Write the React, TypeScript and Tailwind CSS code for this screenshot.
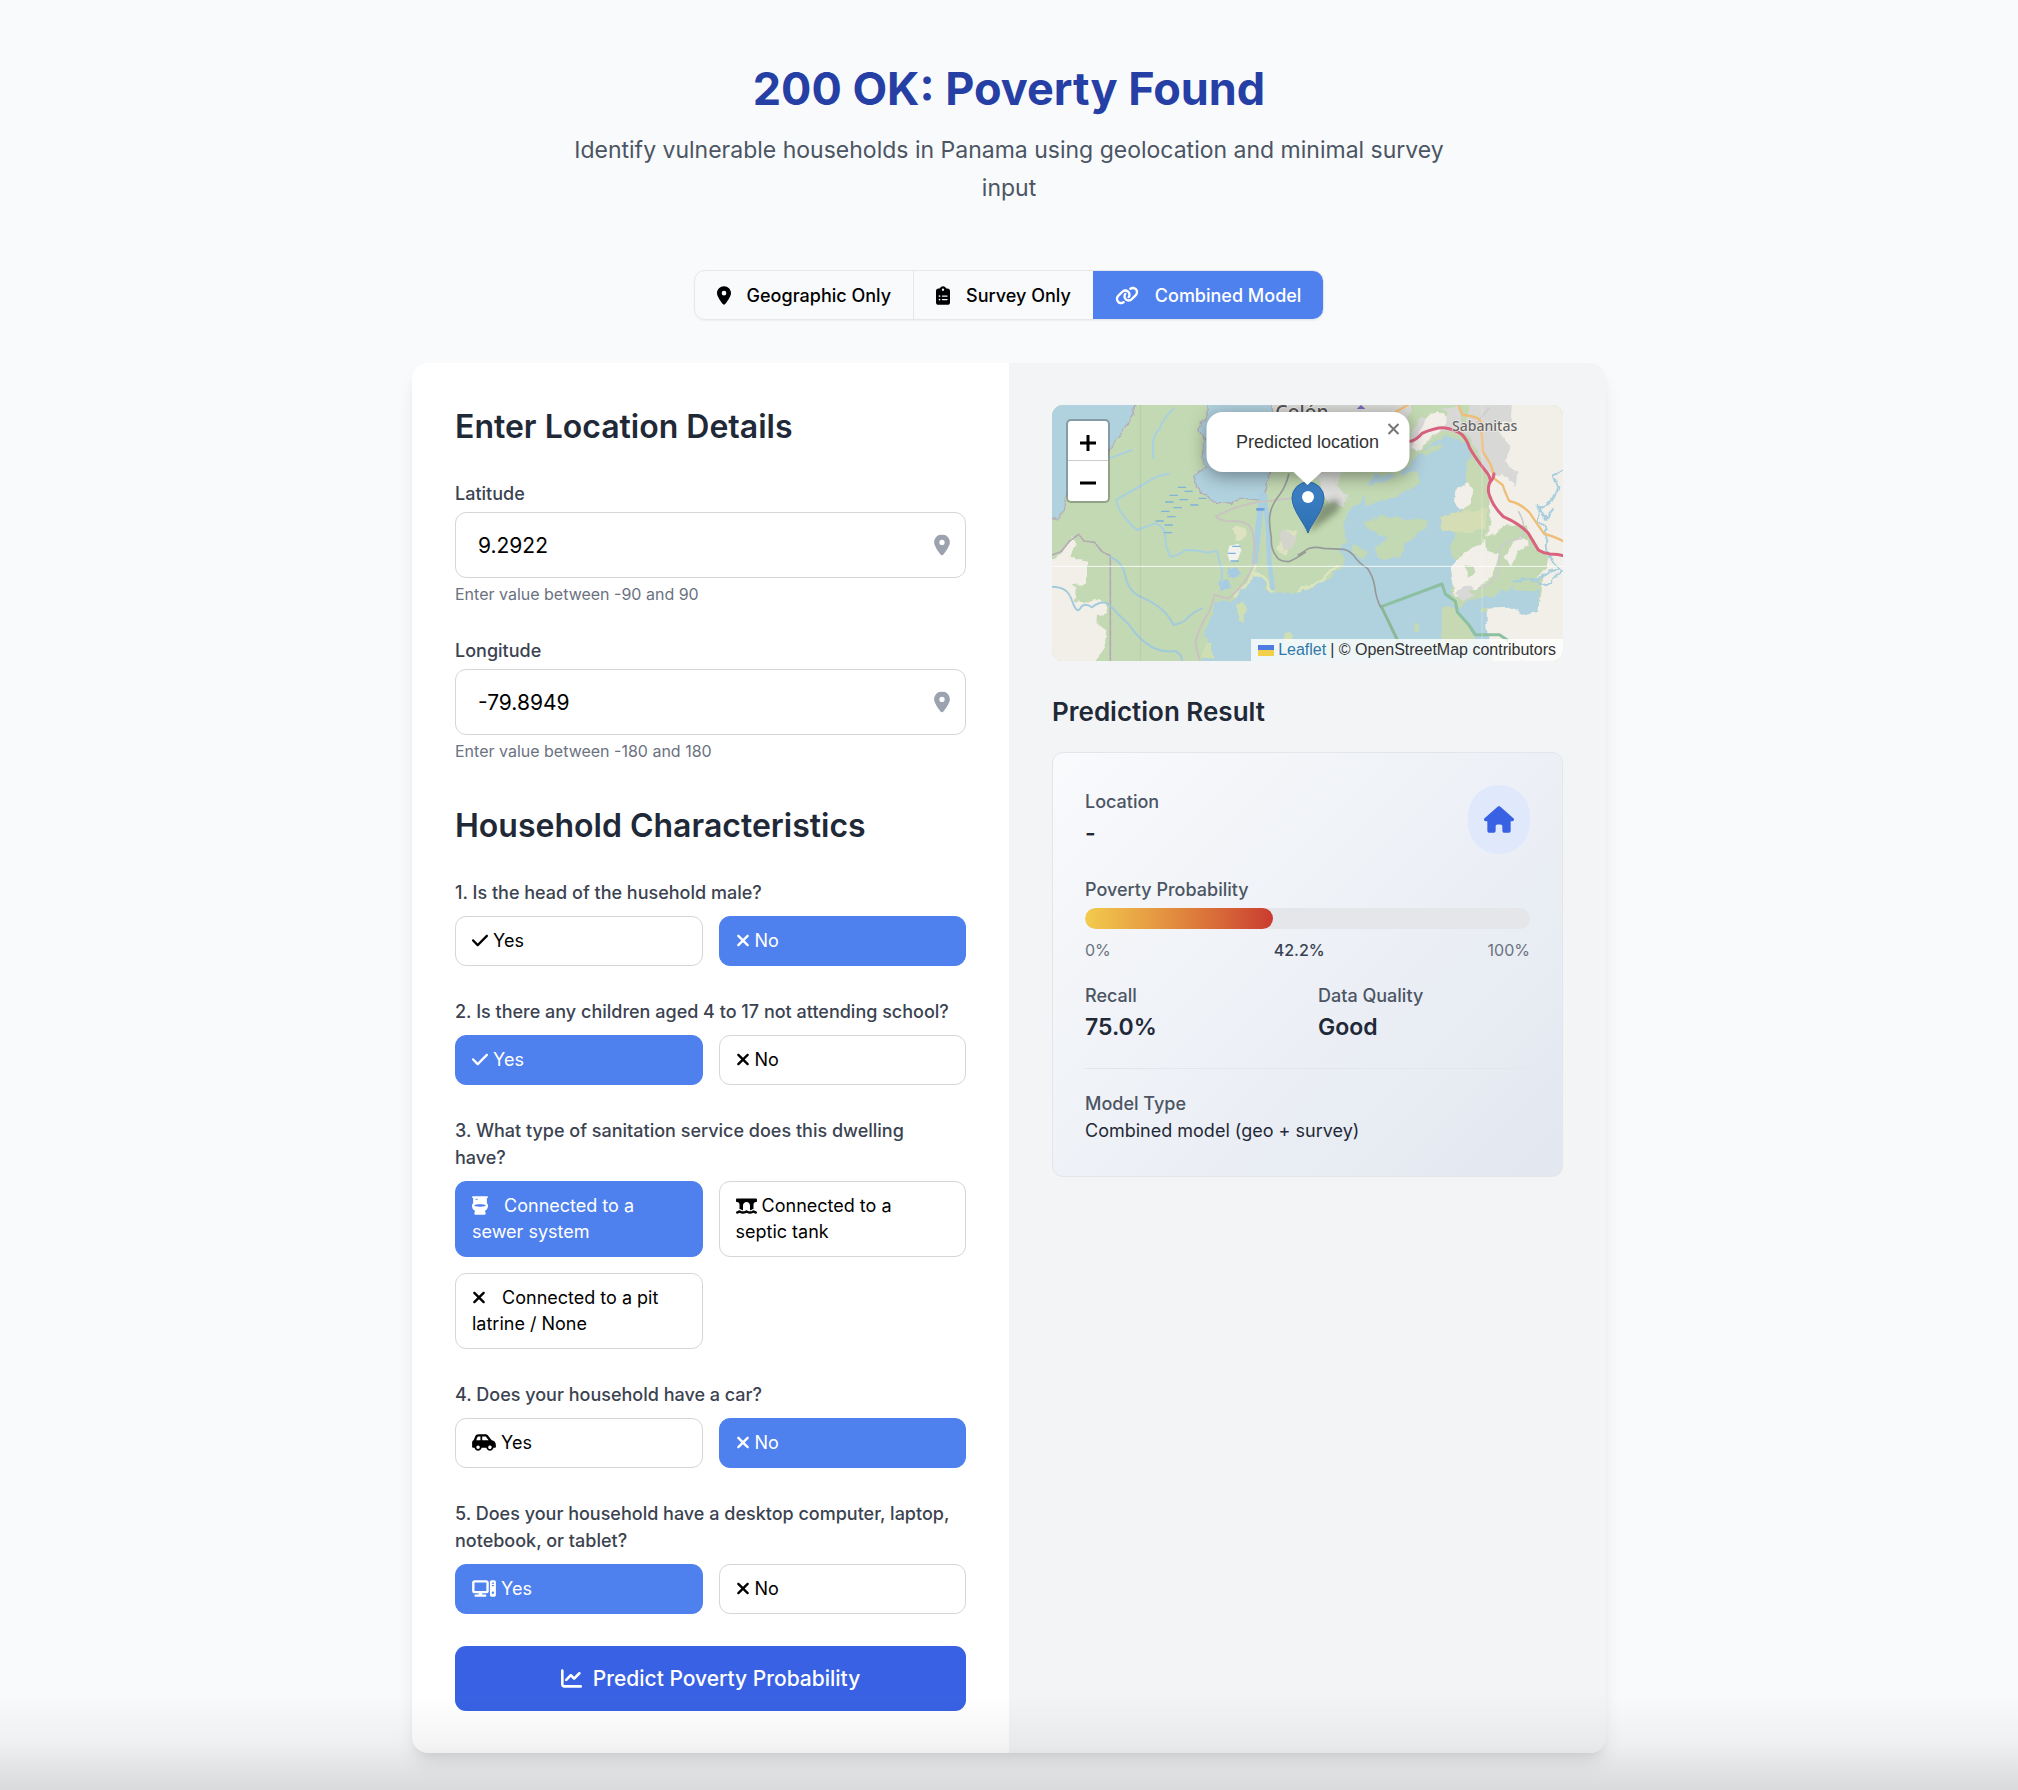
import { useState } from "react";
import type { ReactNode } from "react";
import type { IconType } from "react-icons";
import {
  FaBridgeWater,
  FaCarSide,
  FaChartLine,
  FaCheck,
  FaClipboardList,
  FaComputer,
  FaHouse,
  FaLink,
  FaLocationDot,
  FaToilet,
  FaXmark,
} from "react-icons/fa6";

type Option = { label: string; icon: IconType; size: string };
type Question = { text: string; options: Option[]; selected: number };

const yes: Option = { label: "Yes", icon: FaCheck, size: "w-4" };
const no: Option = { label: "No", icon: FaXmark, size: "w-[14px]" };

const questions: Question[] = [
  { text: "1. Is the head of the husehold male?", options: [yes, no], selected: 1 },
  { text: "2. Is there any children aged 4 to 17 not attending school?", options: [yes, no], selected: 0 },
  {
    text: "3. What type of sanitation service does this dwelling have?",
    options: [
      { label: "Connected to a sewer system", icon: FaToilet, size: "w-4 mr-[11px]" },
      { label: "Connected to a septic tank", icon: FaBridgeWater, size: "w-[21px]" },
      { label: "Connected to a pit latrine / None", icon: FaXmark, size: "w-[14px] mr-[11px]" },
    ],
    selected: 0,
  },
  {
    text: "4. Does your household have a car?",
    options: [{ label: "Yes", icon: FaCarSide, size: "w-6" }, no],
    selected: 1,
  },
  {
    text: "5. Does your household have a desktop computer, laptop, notebook, or tablet?",
    options: [{ label: "Yes", icon: FaComputer, size: "w-6" }, no],
    selected: 0,
  },
];

const models: Option[] = [
  { label: "Geographic Only", icon: FaLocationDot, size: "w-[14px]" },
  { label: "Survey Only", icon: FaClipboardList, size: "w-[14px]" },
  { label: "Combined Model", icon: FaLink, size: "w-6" },
];

function ModelSwitch() {
  const [active, setActive] = useState(2);
  return (
    <div className="flex overflow-hidden rounded-[11px] border border-[#e5e7eb] shadow-xs">
      {models.map(({ label, icon: Icon, size }, i) => (
        <button
          key={label}
          type="button"
          aria-pressed={i === active}
          onClick={() => setActive(i)}
          className={`flex h-12 items-center gap-4 px-[22px] text-[18px] font-medium ${
            i === active ? "bg-[#4f81ee] text-white" : "text-black"
          } ${i === 0 ? "border-r border-[#e5e7eb]" : ""}`}
        >
          <Icon className={`h-[19px] ${size}`} />
          {label}
        </button>
      ))}
    </div>
  );
}

function CoordinateField(props: { id: string; label: string; value: string; hint: string }) {
  return (
    <div>
      <label htmlFor={props.id} className="mb-[5px] block text-[18px] leading-[27px] font-medium text-[#3b4351]">
        {props.label}
      </label>
      <div className="relative">
        <input
          id={props.id}
          type="text"
          defaultValue={props.value}
          className="h-[66px] w-full rounded-[11px] border border-[#d4d6da] bg-white px-[22px] text-[21px] text-black"
        />
        <FaLocationDot className="absolute top-1/2 right-4 h-[21px] w-4 -translate-y-1/2 text-[#9ca3af]" />
      </div>
      <p className="mt-[5px] text-base leading-[22px] text-[#6b7280]">{props.hint}</p>
    </div>
  );
}

function QuestionGroup({ question }: { question: Question }) {
  const [selected, setSelected] = useState(question.selected);
  return (
    <div role="group" aria-label={question.text}>
      <p className="pr-3 text-[18px] leading-[27px] font-medium text-[#3b4351]">{question.text}</p>
      <div className="mt-[10px] grid grid-cols-2 gap-4">
        {question.options.map(({ label, icon: Icon, size }, i) => (
          <button
            key={label}
            type="button"
            aria-pressed={i === selected}
            onClick={() => setSelected(i)}
            className={`rounded-[11px] border py-[11px] pr-7 pl-4 text-left text-[18px] leading-[26px] ${
              i === selected
                ? "border-[#4f81ee] bg-[#4f81ee] text-white"
                : "border-[#d4d6da] bg-white text-black"
            }`}
          >
            <Icon className={`inline-block h-[19px] align-[-3px] ${size}`} /> {label}
          </button>
        ))}
      </div>
    </div>
  );
}

const marshes = [
  [430, 277], [450, 289], [405, 301], [392, 321], [435, 314], [417, 338], [467, 330],
  [380, 349], [398, 365], [363, 378], [390, 390], [388, 413], [492, 310], [593, 454],
  [579, 475], [588, 498],
];

function MapTiles() {
  return (
    <svg
      aria-hidden="true"
      viewBox="39 30 1535 768"
      preserveAspectRatio="xMidYMid slice"
      className="absolute inset-0 h-full w-full"
      fill="none"
      strokeLinejoin="round"
      strokeLinecap="round"
    >
      <defs>
        <filter id="soft" x="-5%" y="-5%" width="110%" height="110%">
          <feTurbulence type="fractalNoise" baseFrequency="0.035" numOctaves="2" seed="4" />
          <feDisplacementMap in="SourceGraphic" scale="22" xChannelSelector="R" yChannelSelector="G" />
          <feGaussianBlur stdDeviation="1.2" />
        </filter>
        <filter id="smooth" x="-5%" y="-5%" width="110%" height="110%">
          <feGaussianBlur stdDeviation="1.2" />
        </filter>
      </defs>
      <rect x="0" y="0" width="1620" height="840" fill="#c3d9b3" />
      <g filter="url(#soft)">
        {/* western sea and bay */}
        <path fill="#b0d1de" stroke="#b4acb8" strokeWidth="4" strokeDasharray="14 5 4 5" d="M30 10H292l-8 46-18 34-30 36-26 44-8 40-60 60-66 36 2 42-18 24-40 6z" />
        <path fill="#b0d1de" stroke="#b0a9bb" strokeWidth="4" strokeDasharray="12 4 4 4" d="M505 10v54l-18 16-6 26 16 30-6 44 12 36-30 20-2 26 16 32 38 26 54 8 8-14 40-2 52 4 6-50 12-80 4-180z" />
        {/* south-west farmland */}
        <path fill="#f2efe9" d="M20 500l47-24 34-46 10 14-16 44 50 12v66l-42 4 8 10-2 38 24 4 32-14 12 10 28 8v30l-30 4-2 24 30 18-4 52-30 54H20z" />
        {/* town north of the pin */}
        <path fill="#d9d9d6" d="M700 10h420l-10 70-90 60-110 80-20 60 30 20-20 14-50-50-70-44h-60z" />
        <path fill="#dde3c0" d="M575 400l26-6 24 20-14 26-20-8zM730 430l20-32 26 12-12 36-30 34-22-20z" />
        <path fill="#d3d4cc" d="M735 405l24 4 16 22-14 26-30 8-6-30z" />
        {/* lake */}
        <path fill="#b0d1de" d="M485 820l20-70-8-40 22-50 12-42 40 4 40-34 30-42 22-18 22 60 75 6 55-14 60-34 35-24 10-30-20-24 22-30-8-50 16-46 40-24 22-60 20-20 70 0 80-80 62-38 60 26 26 44 22 60-18 40-26 28-18 60-40 80 26 60-20 60 8 50 40 22 70-4 90-24 72 14 6 60-30 22-30-16-60-4-36 20v60l-30 20 36 40v60z" />
        <path fill="#a6cbe2" d="M568 518l30 4 8 18-34 8zM540 560l30-4 4 24-32 8z" />
        <path stroke="#dbe5bd" strokeWidth="10" d="M648 510l-8 40-50 50M700 585l-20-30-28-20M780 585l60-24 56-44" />
        <path fill="#cfdfb4" d="M592 630l22-14 8 30-8 40-16-30zM500 750l24-8-4 50-30 5zM740 712l26 6-6 20-24-6z" />
      </g>
      <g filter="url(#smooth)">
        <path stroke="#b3a8b3" strokeWidth="5" strokeDasharray="16 5 4 5" d="M39 480l28-10 26-32 27-20 16 20 32 4 22 28 25 12v315" />
        <path stroke="#a3cadb" strokeWidth="6" d="M39 575q25 0 40 10t24 40q14 35 25 10 12-12 32 2 25-20 46-12 20 18 33 33l31 30q35 50 70 68t70 12q20 10 20 30M215 485q40 20 45 57 10 50 50 65 70 30 95 83 35-10 40-20 20-20 45-30" />
        <path stroke="#a9d0de" strokeWidth="6" d="M232 315q10 45 63 90l55-20q30 10 30 40 0 30 15 60 30-5 45-20 45 0 60 8l35-5q10 40 15 60v45M232 315q50-30 80-45 50-35 78-32M212 190l68-25M405 40q-40 40-40 60-30 20-20 90" />
        <path stroke="#8a95a0" strokeOpacity=".2" strokeWidth="3" d="M305 30v768" />
        <path fill="#f2f3ee" d="M572 452l28-6 8 20-12 30-22 4-8-22z" />
        <g stroke="#7fb4d8" strokeWidth="4">
          {marshes.map(([x, y]) => (
            <path key={`${x}-${y}`} d={`M${x - 11} ${y}h22`} />
          ))}
        </g>
        <path stroke="#a9cfe0" strokeWidth="18" d="M670 300l-10 90-12 110" />
        <path stroke="#a9cfe0" strokeWidth="14" d="M678 300l10 100 4 100 10 80" />
        <path stroke="#6f9fe0" strokeWidth="8" d="M656 343h18" />
      </g>
      <g transform="translate(780 0)">
        <g filter="url(#soft)">
          <path fill="#c3d9b3" d="M195 385l55-24 60 12 74 2-4 26-54 40-26 44-60 6-14-30 44-32-56-20zM165 445l40 24-10 26-32-20zM205 270l56-8 38-24 56-10 10 40-64 32-50 18-50 14-4-30zM365 170l54-26 10 10-50 30z" />
          <path fill="#d5ddb4" d="M425 370l55-22 85-6v60l-70 10-68-2z" />
          <path fill="#c6d9b2" d="M520 160l30 60 20 60-6 60-80 10 20-60-4-60zM430 640l40-2 34 50 24 40-60 30-40-10zM344 684l20 4-4 20-16-4z" />
          {/* eastern plains */}
          <path fill="#f2efe9" d="M470 290l40-26 14 20-6 40-30 20-22-22zM535 140l60-60 50-60h190v780H585l-22-100 2-60 60-6 40 16 55-10 10-90-120-20-80 60-60 16-14-90 46-46 62-36 12-60-10-150z" />
          <path fill="#d8d8d6" d="M520 20h120l-4 60-50 10 50 70-20 40 44 30-10 40-36-30-34 10-50-90-40-60zM350 90l40-40 90-16 20 80-70-10-70 60-50 0zM470 590l50-20 8 30-40 20z" />
          <path fill="#c3d9b3" d="M562 430l60-42 62 6 24 60 46 30-10 40-54 40-60 6-60 40-60-20 60-30 30-80-34-10zM345 36l70-4 30 26-30 26-60-20zM500 510l22 4 6 24-20 10z" />
          <path fill="#f2efe9" d="M640 440l30-16 20 26-30 20-24 40-14-20zM390 60l30-14 30 30-40 40-50 50-20-10z" />
          <path fill="#b0d1de" d="M570 606l70-26 50 10 30-10v70l-40 10-54-22-76 4-30 50-40-40 30-40z" />
          <path stroke="#a7cedd" strokeWidth="6" d="M800 225l-35 16 14 40-20 40-40 16 2 44 24 20-4 56 20 40 26 30-44 44-50-22-50 12M720 330l24 44 22-32M700 560l80-40" />
          <path fill="#dddddb" d="M75 240l30 20 40 40-8 40-50-20-22-40z" />
        </g>
        <g filter="url(#smooth)">
          <path stroke="#cccccc" strokeWidth="5" d="M600 470q10-34 70-40 10-30 0-60l-10-20M540 580q50-10 60-60l4-50M530 90l40-50" />
          <path stroke="#f0bd77" strokeWidth="7" d="M480 30q6 25 14 30 50 5 54 22l4 88q24 35 28 50l6 30 26 20q10 30 20 48 30 5 60 34 20 30 44 64 40 12 60 24M286 54l44-26" />
          <path stroke="#d9627e" strokeWidth="9" d="M330 140q25-5 40-25 40-18 65-17 35 5 55 21 15 15 23 40 20 35 55 78 8 12 6 23-10 25 0 45 10 30 40 60 50 22 75 50 15 25 30 50 15 10 35 12 25 0 45 6M574 262q12-14 12-26" />
          <path stroke="#8cc0a0" strokeWidth="9" d="M248 635l182-68 10 30 30 22 6 32 34 38 20 30h72l24 16" />
          <path stroke="#8bb795" strokeWidth="9" d="M248 635l52 108" />
          <path stroke="#959a98" strokeWidth="5" d="M245 635q-14-30-16-56-5-35-22-58-30-20-42-40-15-16-30-18l-60-3q-40-8-56 8l-20 12" />
        </g>
      </g>
      <g filter="url(#smooth)">
        <path stroke="#c9c4bf" strokeWidth="6" d="M530 365q70-38 150-46l80-9M530 365q20 14 40 14 60-8 72 32 10 50 4 90-10 50-76 110-20-2-42-12-10 40-20 55-34 60-38 90l14 56" />
        <path stroke="#979b96" strokeWidth="5" d="M800 472q-30 20-50 28-30 0-38-18-16-20-14-54-8-50-4-70 5-30 30-60 20-30 26-60" />
      </g>
      <path stroke="#ffffff" strokeOpacity=".3" strokeWidth="3" d="M1330 30v768" />
      <path stroke="#ffffff" strokeOpacity=".85" strokeWidth="3" d="M39 514h1535" />
      <path fill="#7a68b8" d="M954 42l13-12 13 12z" />
      <g fontFamily="'Noto Sans', sans-serif" fontWeight="500" textAnchor="middle" stroke="#f4f2ee" strokeOpacity=".7" paintOrder="stroke">
        <text x="790" y="72" fontSize="58" fill="#555555" strokeWidth="6">Colón</text>
        <text x="1338" y="108" fontSize="42" fill="#666666" strokeWidth="5">Sabanitas</text>
      </g>
    </svg>
  );
}

function LocationMap() {
  return (
    <div className="relative h-64 overflow-hidden rounded-[11px] font-['Liberation_Sans',Arial,sans-serif]">
      <MapTiles />
      <div className="absolute top-[14px] left-[14px] flex flex-col overflow-hidden rounded-[5px] border-2 border-black/25 bg-white bg-clip-padding text-black">
        <button type="button" aria-label="Zoom in" className="flex h-10 w-10 items-center justify-center border-b border-[#cccccc] pt-1">
          <svg viewBox="0 0 16 16" className="h-4 w-4" stroke="currentColor" strokeWidth="3"><path d="M8 0v16M0 8h16" /></svg>
        </button>
        <button type="button" aria-label="Zoom out" className="flex h-10 w-10 items-center justify-center pt-1">
          <svg viewBox="0 0 16 16" className="h-4 w-4" stroke="currentColor" strokeWidth="3"><path d="M0 8h16" /></svg>
        </button>
      </div>

      <svg aria-hidden="true" viewBox="0 0 60 54" className="absolute top-[76px] left-1/2 h-[54px] w-[60px] -translate-x-[17px]">
        <defs>
          <linearGradient id="pin" x1="0" y1="0" x2="0" y2="1">
            <stop offset="0" stopColor="#3f82c6" />
            <stop offset="1" stopColor="#2d6fb3" />
          </linearGradient>
          <filter id="pinShadow" x="-30%" y="-30%" width="160%" height="160%">
            <feGaussianBlur stdDeviation="3" />
          </filter>
        </defs>
        <path d="M17 52l12-28 16-6q8 4 0 14z" fill="#33402f" fillOpacity=".45" filter="url(#pinShadow)" />
        <path d="M17 52C14 43 1 29 1 17a16 16 0 0 1 32 0c0 12-13 26-16 35z" fill="url(#pin)" stroke="#2a66a5" strokeWidth="1" />
        <circle cx="17" cy="16" r="6" fill="#ffffff" />
      </svg>

      <div className="absolute top-[7px] left-1/2 flex h-[60px] w-[203px] -translate-x-1/2 items-center justify-center rounded-2xl bg-white text-[18px] text-[#333333] shadow-[0_4px_18px_rgba(0,0,0,0.4)]">
        Predicted location
        <button type="button" aria-label="Close popup" className="absolute top-[11px] right-[10px] flex h-3 w-3 items-center justify-center text-[#757575]">
          <svg viewBox="0 0 12 12" className="h-3 w-3" stroke="currentColor" strokeWidth="2"><path d="M1 1l10 10M11 1L1 11" /></svg>
        </button>
        <svg aria-hidden="true" viewBox="0 0 28 14" className="absolute top-full left-1/2 h-[14px] w-7 -translate-x-1/2"><path d="M0 0h28L14 13z" fill="#ffffff" /></svg>
      </div>

      <div className="absolute right-0 bottom-0 flex h-[22px] items-center gap-1 bg-white/80 px-[7px] text-base text-[#333333]">
        <svg aria-hidden="true" viewBox="0 0 16 11" className="h-[11px] w-4">
          <path fill="#4c7be1" d="M0 0h16v6H0z" />
          <path fill="#f3d04b" d="M0 5h16v6H0z" />
        </svg>
        <a href="#leaflet" className="text-[#2f78a8]">Leaflet</a>
        <span>| © OpenStreetMap contributors</span>
      </div>
    </div>
  );
}

function Stat({ label, children }: { label: string; children: ReactNode }) {
  return (
    <div>
      <p className="text-[18px] leading-[27px] font-medium text-[#4b5563]">{label}</p>
      <p className="text-[23px] leading-[37px] font-semibold text-[#1f2937]">{children}</p>
    </div>
  );
}

function ResultCard() {
  const probability = 42.2;
  return (
    <div className="rounded-[11px] border border-[#e2e5ea] bg-linear-135 from-[#f9fafc] to-[#e2e7f0] p-8">
      <div className="flex items-center justify-between">
        <Stat label="Location">-</Stat>
        <div className="flex h-[69px] w-[62px] items-center justify-center rounded-full bg-[#dfe9fb]">
          <FaHouse className="h-[27px] w-[30px] text-[#3862e3]" />
        </div>
      </div>
      <p className="mt-[22px] text-[18px] leading-[27px] font-medium text-[#4b5563]">Poverty Probability</p>
      <div className="mt-[5px] h-[21px] overflow-hidden rounded-full bg-[#e5e6ea]">
        <div
          className="h-full rounded-full bg-linear-to-r from-[#f2cb4d] via-[#e0883e] to-[#c93a30]"
          style={{ width: `${probability}%` }}
        />
      </div>
      <div className="mt-[10px] flex justify-between text-base leading-[22px] text-[#6b7280]">
        <span>0%</span>
        <span className="font-medium text-[#374151]">{probability}%</span>
        <span>100%</span>
      </div>
      <div className="mt-[21px] grid grid-cols-2 gap-[21px]">
        <Stat label="Recall">75.0%</Stat>
        <Stat label="Data Quality">Good</Stat>
      </div>
      <div className="mt-[22px] border-t border-[#e3e6eb] pt-[21px] leading-[27px]">
        <p className="text-[18px] font-medium text-[#4b5563]">Model Type</p>
        <p className="text-[18px] text-[#1f2937]">Combined model (geo + survey)</p>
      </div>
    </div>
  );
}

export default function App() {
  return (
    <div className="relative min-h-screen bg-[#f9fafc] px-5 pt-[62px] pb-9 font-['Inter',sans-serif]">
      <header className="mx-auto max-w-[896px] text-center">
        <h1 className="text-[45px] leading-[53px] font-bold text-[#263fa5]">200 OK: Poverty Found</h1>
        <p className="mt-4 text-[23px] leading-[38px] text-[#4b5563]">
          Identify vulnerable households in Panama using geolocation and minimal survey input
        </p>
      </header>

      <div className="mt-[63px] mb-[43px] flex justify-center">
        <ModelSwitch />
      </div>

      <main className="mx-auto grid max-w-[1194px] grid-cols-2 overflow-hidden rounded-2xl bg-white shadow-[0_13px_20px_-4px_rgba(0,0,0,0.1),0_5px_8px_-3px_rgba(0,0,0,0.05)]">
        <form className="px-[43px] py-[42px]" onSubmit={(e) => e.preventDefault()}>
          <h2 className="mb-8 text-[32px] leading-[43px] font-semibold text-[#1f2937]">Enter Location Details</h2>
          <div className="flex flex-col gap-8">
            <CoordinateField id="latitude" label="Latitude" value="9.2922" hint="Enter value between -90 and 90" />
            <CoordinateField id="longitude" label="Longitude" value="-79.8949" hint="Enter value between -180 and 180" />
          </div>
          <h2 className="mt-[42px] mb-8 text-[32px] leading-[43px] font-semibold text-[#1f2937]">
            Household Characteristics
          </h2>
          <div className="flex flex-col gap-8">
            {questions.map((q) => (
              <QuestionGroup key={q.text} question={q} />
            ))}
            <button
              type="submit"
              className="flex h-[65px] items-center justify-center gap-[11px] rounded-[11px] bg-[#3862e3] text-[21px] font-medium text-white"
            >
              <FaChartLine className="h-[21px] w-[21px]" />
              Predict Poverty Probability
            </button>
          </div>
        </form>

        <section className="bg-[#f3f4f6] px-[43px] py-[42px]">
          <LocationMap />
          <h2 className="mt-8 mb-[22px] text-[26px] leading-[37px] font-semibold text-[#1f2937]">Prediction Result</h2>
          <ResultCard />
        </section>
      </main>

      <div className="pointer-events-none absolute inset-x-0 bottom-0 h-24 bg-linear-to-b from-transparent via-black/4 to-black/13" />
    </div>
  );
}
